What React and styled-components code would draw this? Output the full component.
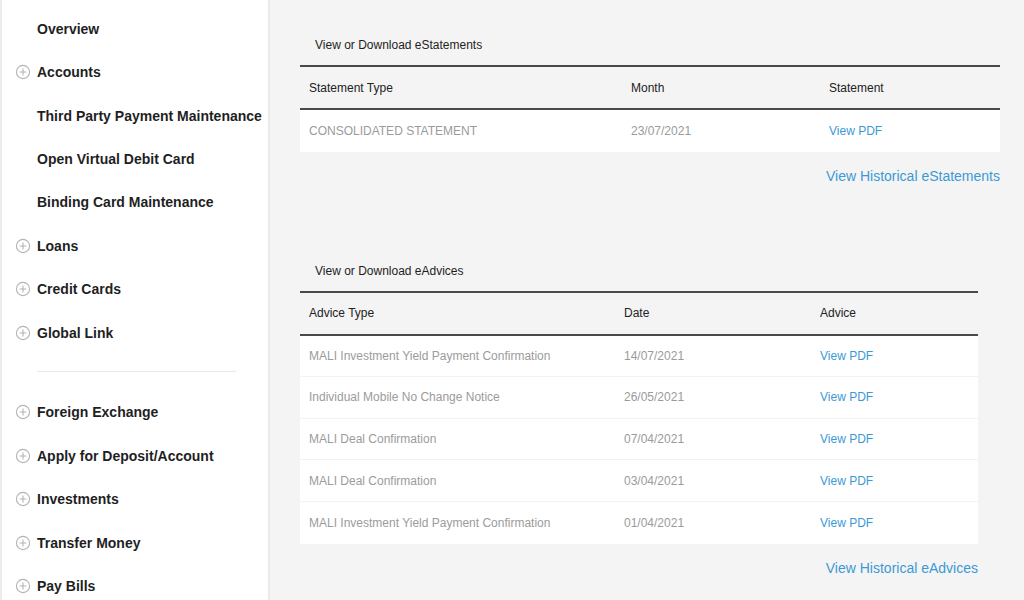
import React from "react";
import styled, { createGlobalStyle } from "styled-components";

const GlobalStyle = createGlobalStyle`
  html, body {
    margin: 0;
    padding: 0;
    background-color: #f4f4f4;
    font-family: "Liberation Sans", Arial, sans-serif;
  }
`;

const Page = styled.div`
  display: flex;
  width: 1024px;
  height: 600px;
  overflow: hidden;
`;

const Sidebar = styled.nav`
  width: 266px;
  flex-shrink: 0;
  background-color: #ffffff;
  border-left: 2px solid #ececec;
  border-right: 2px solid #e9e9e9;
  padding-top: 7px;
  box-sizing: content-box;
`;

const NavItem = styled.div`
  position: relative;
  display: flex;
  align-items: center;
  height: 43.45px;
  padding-left: 35px;
  font-size: 14px;
  font-weight: bold;
  color: #1f1f1f;
  cursor: pointer;
`;

const PlusIcon = styled.svg`
  position: absolute;
  left: 13px;
  top: 50%;
  transform: translateY(-50%);
`;

const Divider = styled.hr`
  border: none;
  border-top: 1px solid #e8e8e8;
  margin: 16px 0 19px 35px;
  width: 199px;
`;

const Main = styled.main`
  flex: 1;
  padding: 33px 0 0 30px;
`;

const Section = styled.section`
  width: ${(p) => p.$width}px;
  margin-bottom: ${(p) => p.$gap || 0}px;
`;

const SectionTitle = styled.div`
  padding-left: 15px;
  font-size: 12px;
  line-height: 24px;
  color: #1e1e1e;
  margin-bottom: 8px;
`;

const Table = styled.div`
  border-top: 2px solid #4a4a4a;
`;

const Row = styled.div`
  display: grid;
  grid-template-columns: ${(p) => p.$cols};
  align-items: center;
  height: ${(p) => (p.$head ? "41px" : "41.6px")};
  background-color: ${(p) => (p.$head ? "transparent" : "#ffffff")};
  border-bottom: ${(p) =>
    p.$head ? "2px solid #4a4a4a" : p.$last ? "none" : "1px solid #f3f3f3"};
  box-sizing: ${(p) => (p.$head ? "content-box" : "border-box")};
`;

const Cell = styled.div`
  padding-left: 9px;
  font-size: 12px;
  color: ${(p) => (p.$head ? "#222222" : "#9b9b9b")};
  white-space: nowrap;
`;

const PdfLink = styled.a`
  padding-left: 9px;
  font-size: 12px;
  color: #3c99d4;
  text-decoration: none;
  cursor: pointer;
`;

const MoreLink = styled.a`
  display: block;
  text-align: right;
  margin-top: 14px;
  font-size: 14px;
  line-height: 20px;
  color: #3c99d4;
  text-decoration: none;
  cursor: pointer;
`;

const Plus = () => (
  <PlusIcon width="16" height="16" viewBox="0 0 16 16" fill="none">
    <circle cx="8" cy="8" r="6.6" stroke="#b4b4b4" strokeWidth="1.1" />
    <path d="M8 4.6v6.8M4.6 8h6.8" stroke="#b4b4b4" strokeWidth="1.1" />
  </PlusIcon>
);

const topMenu = [
  { label: "Overview" },
  { label: "Accounts", plus: true },
  { label: "Third Party Payment Maintenance" },
  { label: "Open Virtual Debit Card" },
  { label: "Binding Card Maintenance" },
  { label: "Loans", plus: true },
  { label: "Credit Cards", plus: true },
  { label: "Global Link", plus: true },
];

const bottomMenu = [
  "Foreign Exchange",
  "Apply for Deposit/Account",
  "Investments",
  "Transfer Money",
  "Pay Bills",
];

const advices = [
  ["MALI Investment Yield Payment Confirmation", "14/07/2021"],
  ["Individual Mobile No Change Notice", "26/05/2021"],
  ["MALI Deal Confirmation", "07/04/2021"],
  ["MALI Deal Confirmation", "03/04/2021"],
  ["MALI Investment Yield Payment Confirmation", "01/04/2021"],
];

const statementCols = "322px 198px 1fr";
const adviceCols = "315px 196px 1fr";

const App = () => {
  return (
    <>
      <GlobalStyle />
      <Page>
        <Sidebar>
          {topMenu.map((item) => (
            <NavItem key={item.label}>
              {item.plus && <Plus />}
              {item.label}
            </NavItem>
          ))}
          <Divider />
          {bottomMenu.map((label) => (
            <NavItem key={label}>
              <Plus />
              {label}
            </NavItem>
          ))}
        </Sidebar>

        <Main>
          <Section $width={700} $gap={73}>
            <SectionTitle>View or Download eStatements</SectionTitle>
            <Table>
              <Row $head $cols={statementCols}>
                <Cell $head>Statement Type</Cell>
                <Cell $head>Month</Cell>
                <Cell $head>Statement</Cell>
              </Row>
              <Row $last $cols={statementCols}>
                <Cell>CONSOLIDATED STATEMENT</Cell>
                <Cell>23/07/2021</Cell>
                <PdfLink>View PDF</PdfLink>
              </Row>
            </Table>
            <MoreLink>View Historical eStatements</MoreLink>
          </Section>

          <Section $width={678}>
            <SectionTitle>View or Download eAdvices</SectionTitle>
            <Table>
              <Row $head $cols={adviceCols}>
                <Cell $head>Advice Type</Cell>
                <Cell $head>Date</Cell>
                <Cell $head>Advice</Cell>
              </Row>
              {advices.map(([type, date], i) => (
                <Row key={i} $last={i === advices.length - 1} $cols={adviceCols}>
                  <Cell>{type}</Cell>
                  <Cell>{date}</Cell>
                  <PdfLink>View PDF</PdfLink>
                </Row>
              ))}
            </Table>
            <MoreLink>View Historical eAdvices</MoreLink>
          </Section>
        </Main>
      </Page>
    </>
  );
};

export default App;
